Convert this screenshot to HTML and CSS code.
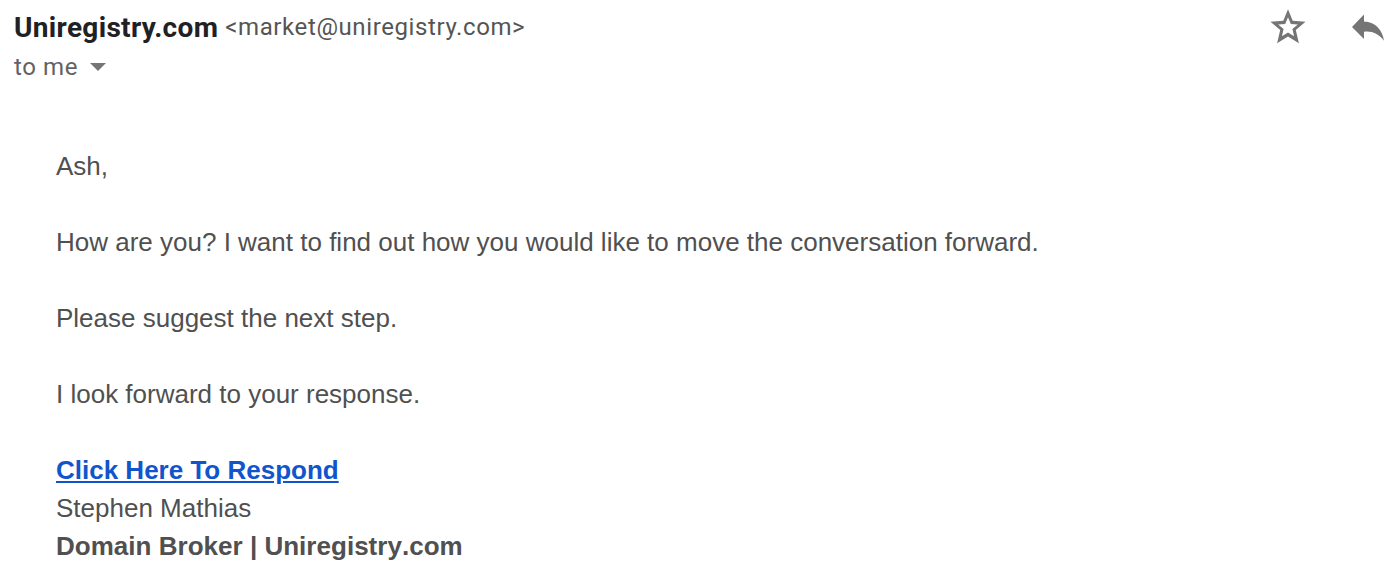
FILE: index.html
```html
<!DOCTYPE html>
<html lang="en">
<head>
    <meta charset="UTF-8">
    <meta name="viewport" content="width=device-width, initial-scale=1.0">
    <title>Uniregistry.com</title>
    <link rel="stylesheet" href="styles.css">
</head>
<body>
    <header class="mail-header">
        <div class="sender">
            <div class="from">
                <span class="name">Uniregistry.com</span>
                <span class="email">&lt;market@uniregistry.com&gt;</span>
            </div>
            <div class="to">
                <span>to me</span>
                <span class="arrow"></span>
            </div>
        </div>
        <div class="actions">
            <svg class="icon" viewBox="0 0 40 40"><path fill-rule="evenodd" d="M20 2.200L24.700 13.700 37.500 14.700 27.800 22.900 30.900 36.200 20 29.400 9.100 36.200 12.200 22.900 2.500 14.700 15.300 13.700zM20 10.200L17.200 17 10.200 17.500 15.600 22.100 13.900 29.300 20 25.500 26.100 29.300 24.400 22.100 29.800 17.500 22.800 17z"/></svg>
            <svg class="icon" viewBox="0 0 40 40"><path d="M16 14.500V7.500L4 19.900l12 12.200v-7.300c8-.9 14 1.500 20 8.900-1.500-10-8-19-20-19.200z"/></svg>
        </div>
    </header>

    <main class="message">
        <p>Ash,</p>
        <p>How are you? I want to find out how you would like to move the conversation forward.</p>
        <p>Please suggest the next step.</p>
        <p>I look forward to your response.</p>
        <div class="signature">
            <a href="#">Click Here To Respond</a>
            <span>Stephen Mathias</span>
            <strong>Domain Broker | Uniregistry.com</strong>
        </div>
    </main>
</body>
</html>
```

FILE: styles.css
```css
body {
    margin: 0;
    background: #fff;
    font-family: "Liberation Sans", Arial, sans-serif;
}
.mail-header {
    display: flex;
    justify-content: space-between;
    padding: 7px 10px 0 14px;
    font-family: Roboto, sans-serif;
}
.from,
.to {
    display: flex;
    align-items: center;
    height: 40px;
    white-space: nowrap;
}
.name {
    font-size: 28px;
    font-weight: bold;
    letter-spacing: 0.33px;
    color: #202124;
}
.email {
    margin-left: 7px;
    font-size: 24px;
    letter-spacing: 0.6px;
    color: #555;
}
.to {
    font-size: 24px;
    letter-spacing: 0.6px;
    color: #5f6368;
}
.arrow {
    margin-left: 12px;
    border: 8px solid transparent;
    border-top-color: #757575;
    border-bottom: 0;
}
.actions {
    display: flex;
    gap: 40px;
}
.icon {
    width: 40px;
    height: 40px;
    fill: #757575;
}
.message {
    padding: 60px 56px 0;
    font-size: 26px;
    line-height: 38px;
    color: #505050;
}
.message p {
    margin: 0 0 38px;
}
.signature {
    display: flex;
    flex-direction: column;
    align-items: flex-start;
}
.signature a {
    font-weight: bold;
    color: #1155cc;
}
.signature strong {
    font-kerning: none;
    letter-spacing: 0.02px;
}
```
